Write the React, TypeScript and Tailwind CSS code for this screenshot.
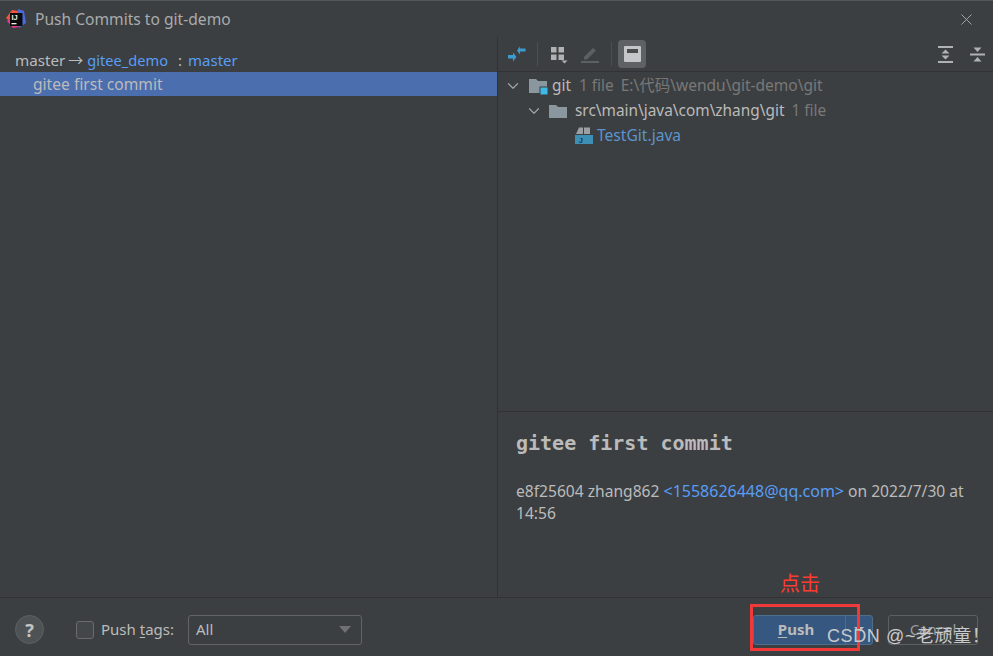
import { ChevronDown, X } from "lucide-react";

const sans = { fontFamily: '"Noto Sans", "Noto Sans CJK SC", sans-serif' };

const IdeaLogo = () => (
  <svg width="20" height="20" viewBox="0 0 20 20" className="shrink-0">
    <path d="M0 9 L6 1 L13 2 L6 14 Z" fill="#f0553a" />
    <path d="M12 0 L18 2 L20 14 L13 19 Z" fill="#4a6be0" />
    <path d="M1 12 L7 19 L13 18 L5 8 Z" fill="#e8368f" />
    <rect x="4" y="4" width="12.5" height="13" fill="#0b0b0b" />
    <text x="5.5" y="11" fontSize="7.5" fontWeight="700" fill="#eeeeee" fontFamily="Liberation Sans">IJ</text>
    <rect x="5.5" y="14" width="5" height="1.3" fill="#eee" />
  </svg>
);

const Toolbar = () => (
  <div className="h-[35px] flex items-center pl-[9px] pr-[6px] border-b border-[#323232]">
    <svg width="20" height="20" viewBox="0 0 20 20">
      <path d="M19 3.5 L19 6.5 L13.5 6.5 L13.5 9.5 L10.5 5.5 L13.5 1.5 L13.5 3.5 Z" fill="#3d9bd0" transform="translate(-0.5 1)" />
      <path d="M1 11 L6 11 L6 8.5 L9.5 13 L6 17.5 L6 14.5 L1 14.5 Z" fill="#3d9bd0" />
    </svg>
    <div className="w-px h-[24px] bg-[#4c4f51] ml-[10px]" />
    <svg width="20" height="20" viewBox="0 0 20 20" className="ml-[11px]">
      <rect x="2" y="3" width="5.5" height="5.5" fill="#afb1b3" />
      <rect x="9.5" y="3" width="5.5" height="5.5" fill="#afb1b3" />
      <rect x="2" y="10.5" width="5.5" height="5.5" fill="#afb1b3" />
      <rect x="9.5" y="10.5" width="5.5" height="5.5" fill="#afb1b3" />
      <path d="M12.5 16.5 H18.5 L15.5 19.5 Z" fill="#afb1b3" />
    </svg>
    <svg width="20" height="20" viewBox="0 0 20 20" className="ml-[11px]">
      <path d="M4 13 L13 4 L16 6.5 L7 15.5 L4 15.5 Z" fill="#5d6062" />
      <rect x="1" y="17" width="18" height="2" fill="#5d6062" />
    </svg>
    <div className="w-px h-[24px] bg-[#4c4f51] ml-[11px]" />
    <div className="w-[28px] h-[28px] ml-[6px] rounded-[4px] bg-[#5f6264] flex items-center justify-center">
      <div className="w-[17px] h-[16px] bg-[#c4c6c8] rounded-[1px] flex items-start justify-center pt-[3px]">
        <div className="w-[11px] h-[4px] bg-[#4a4c4e]" />
      </div>
    </div>
    <div className="flex-1" />
    <svg width="18" height="20" viewBox="0 0 18 20">
      <rect x="1" y="2" width="15" height="2" fill="#afb1b3" />
      <rect x="1" y="17" width="15" height="2" fill="#afb1b3" />
      <path d="M8.5 5.5 L12.5 9.5 H4.5 Z" fill="#afb1b3" />
      <path d="M8.5 15.5 L12.5 11.5 H4.5 Z" fill="#afb1b3" />
    </svg>
    <svg width="18" height="20" viewBox="0 0 18 20" className="ml-[14px]">
      <rect x="1" y="9.5" width="15" height="2" fill="#afb1b3" />
      <path d="M8.5 8 L4.5 3.5 H12.5 Z" fill="#afb1b3" />
      <path d="M8.5 13 L4.5 17.5 H12.5 Z" fill="#afb1b3" />
    </svg>
  </div>
);

const Tree = () => (
  <div className="h-[339px] pt-[1px] text-[15.4px] text-[#bbbbbb]">
    <div className="h-[25px] flex items-center pl-[6px]">
      <ChevronDown size={18} strokeWidth={1.6} color="#a0a2a4" />
      <svg width="20" height="20" viewBox="0 0 20 20" className="ml-[6px]">
        <path d="M1 3 H8 L10 5 H19 V17 H1 Z" fill="#8a979f" />
        <rect x="12" y="11" width="8" height="8" fill="#3db8e8" stroke="#3c3f41" strokeWidth="1" />
      </svg>
      <span className="ml-[4px] leading-none">git</span>
      <span className="ml-[8px] text-[#787878] leading-none">1 file</span>
      <span className="ml-[7px] text-[15.5px] text-[#787878] leading-none">E:\代码\wendu\git-demo\git</span>
    </div>
    <div className="h-[25px] flex items-center pl-[27px]">
      <ChevronDown size={18} strokeWidth={1.6} color="#a0a2a4" />
      <svg width="18" height="16" viewBox="0 0 18 16" className="ml-[6px]">
        <path d="M0 2 H7 L9 4 H18 V15 H0 Z" fill="#8a979f" />
      </svg>
      <span className="ml-[8px] leading-none">src\main\java\com\zhang\git</span>
      <span className="ml-[7px] text-[#787878] leading-none">1 file</span>
    </div>
    <div className="h-[25px] flex items-center pl-[76px]">
      <svg width="20" height="20" viewBox="0 0 20 20">
        <path d="M5 1.5 H9 V8 H2 Z" fill="#9da0a2" />
        <rect x="10" y="1.5" width="6" height="6.5" fill="#9da0a2" />
        <rect x="1" y="9" width="18" height="9" fill="#3d8fb5" />
        <text x="5" y="16.5" fontSize="7" fontWeight="700" fill="#23333c" fontFamily="Liberation Sans">J</text>
      </svg>
      <span className="ml-[3px] text-[15.6px] text-[#5b94cc] leading-none">TestGit.java</span>
    </div>
  </div>
);

const Details = () => (
  <div className="flex-1 border-t border-[#323232] px-[18px] pt-[16px] text-[#bbbbbb]">
    <div className="text-[20px] leading-[30px] font-bold" style={{ fontFamily: '"DejaVu Sans Mono", monospace' }}>gitee first commit</div>
    <div className="mt-[22px] text-[15.6px] leading-[22px]">
      e8f25604 zhang862 <span className="text-[16px] text-[#589df6]">&lt;1558626448@qq.com&gt;</span> on 2022/7/30 at 14:56
    </div>
  </div>
);

const Footer = () => (
  <div className="h-[59px] border-t border-[#323232] flex items-center pl-[15px] pr-[15px] pt-[5px] text-[15px] text-[#bbbbbb]">
    <div className="w-[29px] h-[29px] rounded-full bg-[#4f5254] border border-[#5e6163] flex items-center justify-center text-[18px] font-bold leading-none text-[#c2c4c6]">?</div>
    <div className="w-[18px] h-[18px] ml-[32px] rounded-[3px] border border-[#6b6b6b] bg-[#43474a]" />
    <span className="ml-[7px]">Push <span className="underline underline-offset-2">t</span>ags:</span>
    <div className="ml-[14px] w-[174px] h-[30px] rounded-[3px] border border-[#646464] flex items-center pl-[7px] pr-[10px]">
      <span className="flex-1">All</span>
      <div className="w-0 h-0 border-x-[6px] border-x-transparent border-t-[7px] border-t-[#6f7173]" />
    </div>
    <div className="flex-1" />
    <div className="w-[120px] h-[30px] rounded-[3px] bg-[#365880] border border-[#4c708c] flex items-center text-[#bbbbbb] font-bold">
      <span className="w-[84px] text-center"><span className="underline underline-offset-2">P</span>ush</span>
      <div className="w-px h-full bg-[#4c708c] ml-[7px]" />
      <div className="flex-1 flex justify-center">
        <div className="w-0 h-0 border-x-[5px] border-x-transparent border-t-[6px] border-t-[#bbbbbb]" />
      </div>
    </div>
    <div className="ml-[15px] w-[90px] h-[30px] rounded-[3px] bg-[#3c3f41] border border-[#5e6060] flex items-center justify-center text-[#9a9c9e]">Cancel</div>
  </div>
);

export default function App() {
  return (
    <div className="relative w-[993px] h-[656px] overflow-hidden bg-[#3c3f41] flex flex-col" style={sans}>
      {/* Title bar */}
      <div className="h-[37px] shrink-0 flex items-center pl-[6px] pr-[17px] border-t border-[#545658]">
        <IdeaLogo />
        <span className="ml-[9px] mt-[2px] text-[15.6px] text-[#a9abad]">Push Commits to git-demo</span>
        <div className="flex-1" />
        <X size={19} strokeWidth={1.2} color="#a9abad" />
      </div>

      <div className="flex-1 flex min-h-0">
        {/* Commit list */}
        <div className="w-[498px] border-r border-[#323232] text-[15px] text-[#bbbbbb]">
          <div className="h-[35px] flex items-end pb-[1px] pl-[15px] leading-[22px]">
            <span className="text-[15.2px]">master</span>
            <span className="ml-[3px] mr-[4px]">→</span>
            <span className="text-[14.6px] text-[#589df6]">gitee_demo</span>
            <span className="ml-[10px] mr-[6px]">:</span>
            <span className="text-[15px] text-[#589df6]">master</span>
          </div>
          <div className="h-[24px] bg-[#4b6eaf] pl-[33px] leading-[24px] text-[15.6px]">gitee first commit</div>
        </div>
        {/* Changed files and commit details */}
        <div className="flex-1 flex flex-col min-w-0">
          <Toolbar />
          <Tree />
          <Details />
        </div>
      </div>

      <Footer />

      {/* Annotations on top of the screenshot */}
      <div className="absolute left-[780px] top-[570px] text-[#ff3b30] text-[20px] leading-[26px]" style={{ fontFamily: '"Noto Sans CJK SC", sans-serif' }}>点击</div>
      <div className="absolute left-[750px] top-[604px] w-[110px] h-[47px] border-[3px] border-[#f03a3a]" />
      <div className="absolute left-[827px] top-[624px] text-[18px] leading-[24px] tracking-[0.6px] text-[#c8cacc] whitespace-nowrap" style={{ fontFamily: '"Liberation Sans", "Noto Sans CJK SC", sans-serif' }}>CSDN @~老顽童！</div>
    </div>
  );
}
